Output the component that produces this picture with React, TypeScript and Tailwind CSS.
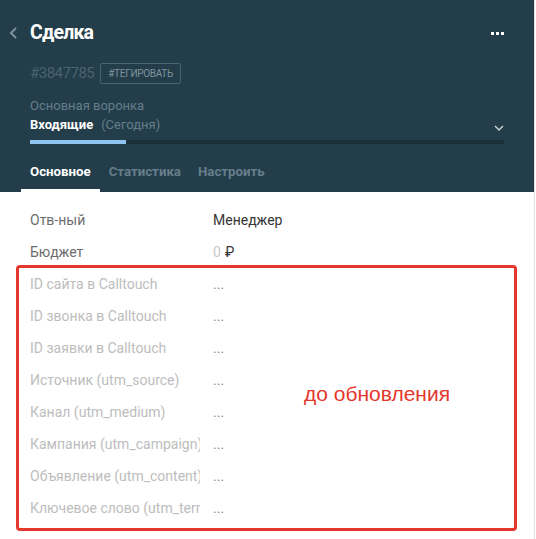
import React from "react";

const rows = [
  "ID сайта в Calltouch",
  "ID звонка в Calltouch",
  "ID заявки в Calltouch",
  "Источник (utm_source)",
  "Канал (utm_medium)",
  "Кампания (utm_campaign)",
  "Объявление (utm_content)",
  "Ключевое слово (utm_term)",
];

export default function App() {
  return (
    <div
      className="w-[536px] h-[539px] bg-white overflow-hidden flex"
      style={{ fontFamily: "Roboto, 'Noto Sans', sans-serif" }}
    >
      <div className="w-[535px] border-r border-[#e2e2e2] flex flex-col">
        {/* Header */}
        <div className="bg-[#233d4a] h-[192px] flex flex-col">
          <div className="flex items-center h-[24px] mt-[21px] pl-[9px] pr-[30px]">
            <svg width="10" height="12" viewBox="0 0 10 12" className="mr-[11px]">
              <path d="M7 1 L2 6 L7 11" stroke="#7f929c" strokeWidth="2" fill="none" />
            </svg>
            <div className="text-white font-bold text-[19.5px] leading-[24px] tracking-[-0.8px]">Сделка</div>
            <div className="ml-auto flex gap-[2px]">
              <span className="w-[3px] h-[3px] bg-white" />
              <span className="w-[3px] h-[3px] bg-white" />
              <span className="w-[3px] h-[3px] bg-white" />
            </div>
          </div>
          <div className="flex items-center mt-[18px] pl-[30px]">
            <span className="text-[#4b6370] text-[15px] leading-[21px] tracking-[-0.5px]">#3847785</span>
            <span className="ml-[6px] h-[21px] px-[7px] border border-[#4b6370] rounded-[2px] flex items-center text-[10px] text-[#7f939e] tracking-[-0.3px]">
              #ТЕГИРОВАТЬ
            </span>
          </div>
          <div className="pl-[30px] pr-[30px] mt-[14px] relative">
            <div className="text-[#667e8b] text-[13px] leading-[16px]">Основная воронка</div>
            <div className="text-[13px] leading-[19px] mt-[1px]">
              <span className="text-white font-bold">Входящие</span>
              <span className="text-[#667e8b] ml-[8px]">(Сегодня)</span>
            </div>
            <svg width="10" height="7" viewBox="0 0 10 7" className="absolute right-[30px] top-[27px]">
              <path d="M1 1 L5 5 L9 1" stroke="#c9d3d8" strokeWidth="1.5" fill="none" />
            </svg>
            <div className="h-[4px] bg-[#1a313c] mt-[6px] flex">
              <div className="w-[96px] bg-[#8ec4ef]" />
            </div>
          </div>
          <div className="flex pl-[21px] mt-auto">
            <div className="px-[9px] border-b-[3px] border-white pb-[9px] text-white font-bold text-[13.25px] leading-[16px]">Основное</div>
            <div className="px-[8px] ml-[1px] border-b-[3px] border-transparent pb-[9px] text-[#667e8b] font-bold text-[13.25px] leading-[16px]">Статистика</div>
            <div className="px-[8px] ml-[1px] border-b-[3px] border-transparent pb-[9px] text-[#667e8b] font-bold text-[13.25px] leading-[16px]">Настроить</div>
          </div>
        </div>

        {/* Body */}
        <div className="pt-[12px] text-[14px]">
          <div className="flex h-[32px] items-center pl-[30px]">
            <div className="w-[183px] text-[#6d6d6d]">Отв-ный</div>
            <div className="text-[#353535]">Менеджер</div>
          </div>
          <div className="flex h-[29px] items-start pt-[6px] pl-[30px]">
            <div className="w-[183px] text-[#6d6d6d]">Бюджет</div>
            <div>
              <span className="text-[#c8c8c8]">0</span>
              <span className="text-[#353535] ml-[4px]">₽</span>
            </div>
          </div>
          <div className="relative ml-[16px] w-[501px] border-[3px] border-[#e5372c] rounded-[4px] pb-[4px]">
            {rows.map((r) => (
              <div key={r} className="flex h-[32px] items-center pl-[11px]">
                <div className="w-[170px] text-[#bdbdbd] whitespace-nowrap overflow-hidden">{r}</div>
                <div className="ml-[13px] text-[#8a8a8a]">...</div>
              </div>
            ))}
            <div
              className="absolute left-[285px] top-[114px] text-[#e5372c] text-[21px] leading-[24px]"
              style={{ fontFamily: "'Liberation Sans', Arial, sans-serif" }}
            >
              до обновления
            </div>
          </div>
        </div>
      </div>
    </div>
  );
}
